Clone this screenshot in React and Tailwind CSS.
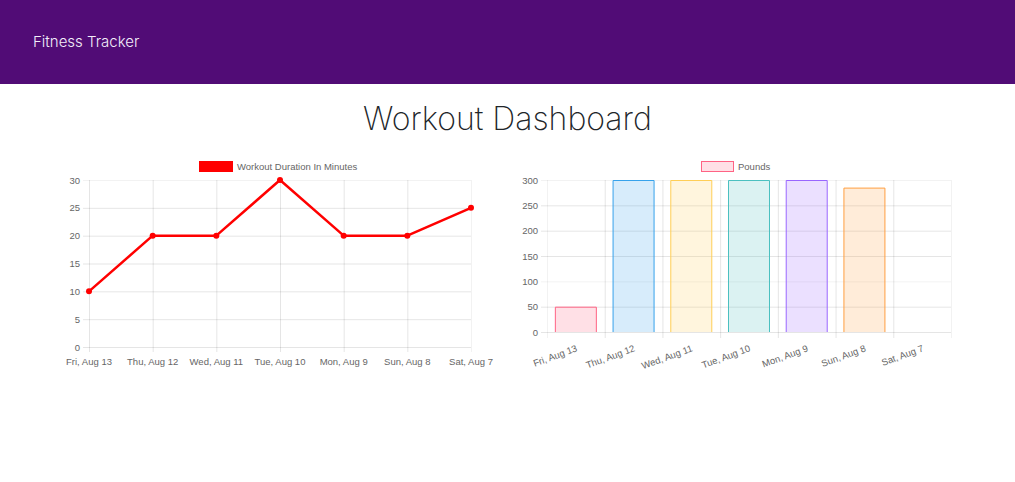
const lineData = [
  { label: 'Fri, Aug 13', value: 10 },
  { label: 'Thu, Aug 12', value: 20 },
  { label: 'Wed, Aug 11', value: 20 },
  { label: 'Tue, Aug 10', value: 30 },
  { label: 'Mon, Aug 9', value: 20 },
  { label: 'Sun, Aug 8', value: 20 },
  { label: 'Sat, Aug 7', value: 25 },
];

const barData = [
  { label: 'Fri, Aug 13', value: 50, fill: 'rgba(255,99,132,0.2)', stroke: 'rgb(255,99,132)' },
  { label: 'Thu, Aug 12', value: 300, fill: 'rgba(54,162,235,0.2)', stroke: 'rgb(54,162,235)' },
  { label: 'Wed, Aug 11', value: 300, fill: 'rgba(255,206,86,0.2)', stroke: 'rgb(255,206,86)' },
  { label: 'Tue, Aug 10', value: 300, fill: 'rgba(75,192,192,0.2)', stroke: 'rgb(75,192,192)' },
  { label: 'Mon, Aug 9', value: 300, fill: 'rgba(153,102,255,0.2)', stroke: 'rgb(153,102,255)' },
  { label: 'Sun, Aug 8', value: 285, fill: 'rgba(255,159,64,0.2)', stroke: 'rgb(255,159,64)' },
  { label: 'Sat, Aug 7', value: 0, fill: 'rgba(255,99,132,0.2)', stroke: 'rgb(255,99,132)' },
];

const font = '"Liberation Sans", Arial, sans-serif';
const grid = 'rgba(0,0,0,0.1)';

function LineChart() {
  // svg origin sits at page x=50, y=155
  const left = 39, right = 421, top = 25, bottom = 192;
  const step = (right - left) / 6;
  const y = (v) => bottom - (v / 30) * (bottom - top);
  const pts = lineData.map((d, i) => [left + i * step, y(d.value)]);

  return (
    <svg width="455" height="220" className="block">
      <rect x="149" y="6" width="34" height="11" fill="#ff0000" />
      <text x="187" y="15" fontSize="9.5" fill="#666" fontFamily={font}>Workout Duration In Minutes</text>

      {[0, 5, 10, 15, 20, 25, 30].map((v) => (
        <g key={v}>
          <line x1={left - 6} x2={right} y1={y(v) + 0.5} y2={y(v) + 0.5} stroke={v === 30 ? 'rgba(0,0,0,0.05)' : grid} />
          <text x={left - 9} y={y(v) + 3.5} fontSize="9.5" fill="#666" textAnchor="end" fontFamily={font}>{v}</text>
        </g>
      ))}
      {lineData.map((d, i) => (
        <g key={d.label}>
          <line x1={left + i * step + 0.5} x2={left + i * step + 0.5} y1={top} y2={bottom + 5} stroke={i === 6 ? 'rgba(0,0,0,0.05)' : grid} />
          <text x={left + i * step} y={210} fontSize="9.5" fill="#666" textAnchor="middle" fontFamily={font}>{d.label}</text>
        </g>
      ))}

      <polyline points={pts.map((p) => p.join(',')).join(' ')} fill="none" stroke="#ff0000" strokeWidth="2.5" strokeLinejoin="round" />
      {pts.map((p, i) => (
        <circle key={i} cx={p[0]} cy={p[1]} r="3" fill="#ff0000" />
      ))}
    </svg>
  );
}

function BarChart() {
  // svg origin sits at page x=505, y=155
  const left = 42, right = 446, top = 25, bottom = 177;
  const step = (right - left) / 7;
  const y = (v) => bottom - (v / 300) * (bottom - top);
  const bw = 41;

  return (
    <svg width="455" height="220" className="block">
      <rect x="196.5" y="6.5" width="32" height="10" fill="rgba(255,99,132,0.2)" stroke="rgb(255,99,132)" />
      <text x="233" y="15" fontSize="9.5" fill="#666" fontFamily={font}>Pounds</text>

      {[0, 50, 100, 150, 200, 250, 300].map((v) => (
        <g key={v}>
          <line x1={left - 6} x2={right} y1={y(v) + 0.5} y2={y(v) + 0.5} stroke={v === 300 || v === 100 ? 'rgba(0,0,0,0.05)' : grid} />
          <text x={left - 9} y={y(v) + 3.5} fontSize="9.5" fill="#666" textAnchor="end" fontFamily={font}>{v}</text>
        </g>
      ))}
      {Array.from({ length: 8 }).map((_, i) => (
        <line key={i} x1={left + i * step + 0.5} x2={left + i * step + 0.5} y1={top} y2={bottom + 6} stroke={i === 0 || i === 7 ? 'rgba(0,0,0,0.05)' : grid} />
      ))}

      {barData.map((d, i) => {
        const cx = left + i * step + step / 2;
        const ty = y(d.value);
        return (
          <g key={d.label}>
            {d.value > 0 && (
              <path
                d={`M${cx - bw / 2} ${bottom} V${ty + 0.5} H${cx + bw / 2} V${bottom}`}
                fill={d.fill}
                stroke={d.stroke}
                strokeWidth="1"
              />
            )}
            <text
              x={cx + 2}
              y={196}
              fontSize="9.5"
              fill="#666"
              textAnchor="end"
              fontFamily={font}
              transform={`rotate(-20 ${cx + 2} 196)`}
            >
              {d.label}
            </text>
          </g>
        );
      })}
    </svg>
  );
}

export default function App() {
  return (
    <div className="min-h-[482px] bg-white">
      <nav className="h-[84px] bg-[#510c76] flex items-center px-[33px]">
        <span className="text-[15px] text-[#f3eefa] font-light" style={{ fontFamily: 'Inter, sans-serif' }}>
          Fitness Tracker
        </span>
      </nav>

      <h1 className="mt-[16px] text-center text-[32px] leading-[38px] font-extralight text-[#212529] font-['Inter',sans-serif]">
        Workout Dashboard
      </h1>

      <div className="mt-[17px] flex pl-[50px]">
        <LineChart />
        <BarChart />
      </div>
    </div>
  );
}
